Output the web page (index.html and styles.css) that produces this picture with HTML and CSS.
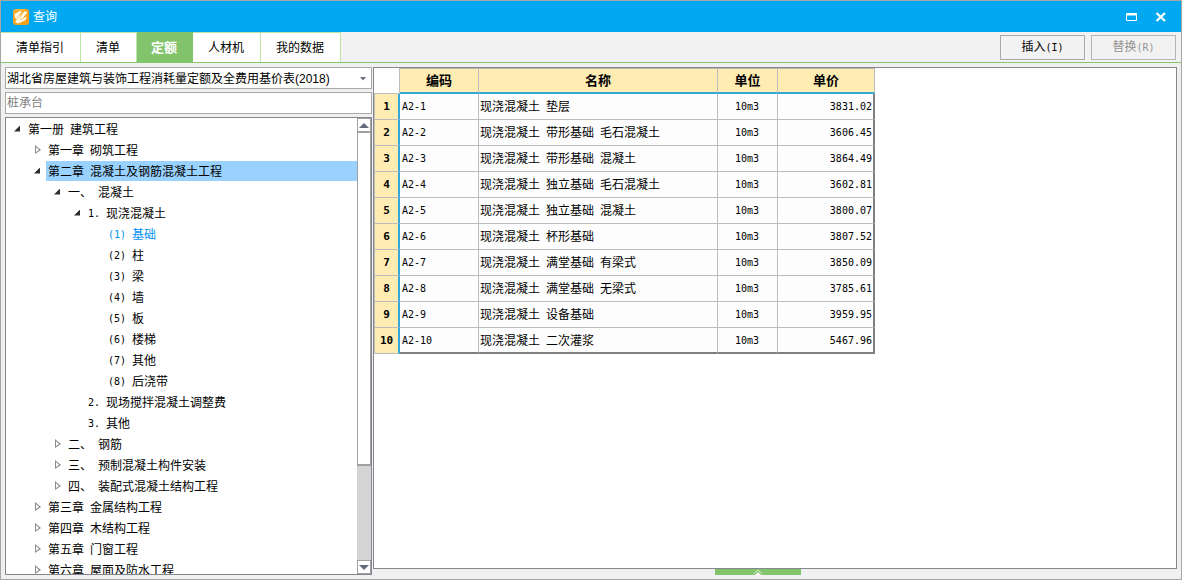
FILE: index.html
```html
<!DOCTYPE html>
<html lang="zh-CN">
<head>
<meta charset="utf-8">
<title>查询</title>
<link rel="stylesheet" href="styles.css">
</head>
<body>
<div class="window">
  <header class="titlebar">
    <svg class="logo" viewBox="0 0 16 16" aria-hidden="true">
      <rect width="16" height="16" rx="3" fill="#f9a11b"/>
      <path d="M1 4c0-2 1-3 3-3h8" stroke="#fcc860" fill="none"/>
      <path d="M1.500 5L7 2l2 1-3 3 1 1 5-5 2.500 1.500L10 8.500l4-.500-2 3.500L5 14.500 2 13l2-3-2-1z" fill="#fffbe8"/>
      <path d="M5.500 6.500L4 9.500M6.500 10l2.500 .500 4-3.500M9 6.500L6.500 9" stroke="#f6b545" stroke-width=".8" fill="none"/>
    </svg>
    <h1 class="title">查询</h1>
    <div class="window-buttons">
      <button class="window-button" aria-label="最大化"><svg width="12" height="10" viewBox="0 0 12 10"><path d="M.500 1v7.500h10V1" stroke="#fff" fill="none"/><path d="M0 1h11v2.500H0z" fill="#fff"/></svg></button>
      <button class="window-button" aria-label="关闭"><svg width="12" height="10" viewBox="0 0 12 10"><path d="M1.500 1l8.500 8M10 1L1.500 9" stroke="#fff" stroke-width="2.200" fill="none"/></svg></button>
    </div>
  </header>

  <div class="toolbar">
    <nav class="tabs" role="tablist">
      <button class="tab" role="tab">清单指引</button>
      <button class="tab" role="tab">清单</button>
      <button class="tab active" role="tab" aria-selected="true">定额</button>
      <button class="tab" role="tab">人材机</button>
      <button class="tab" role="tab">我的数据</button>
    </nav>
    <div class="actions">
      <button class="action">插入<span class="mono">(I)</span></button>
      <button class="action" disabled>替换<span class="mono">(R)</span></button>
    </div>
  </div>

  <main class="content">
    <aside class="sidebar">
      <div class="combo">
        <select class="field" aria-label="定额库"><option>湖北省房屋建筑与装饰工程消耗量定额及全费用基价表(2018)</option></select>
        <svg class="combo-arrow" width="6" height="4" viewBox="0 0 6 4" aria-hidden="true"><path d="M0 0h6L3 3.500z" fill="#6b7080"/></svg>
      </div>
      <input class="field" type="text" placeholder="桩承台" aria-label="搜索">
      <div class="tree-box">
        <ul class="tree" role="tree">
          <li>
            <div class="row"><button class="toggle open" aria-label="折叠"></button><span class="label"><span>第一册</span><span>建筑工程</span></span></div>
            <ul>
              <li><div class="row"><button class="toggle" aria-label="展开"></button><span class="label"><span>第一章</span><span>砌筑工程</span></span></div></li>
              <li>
                <div class="row"><button class="toggle open" aria-label="折叠"></button><span class="label selected"><span>第二章</span><span>混凝土及钢筋混凝土工程</span></span></div>
                <ul>
                  <li>
                    <div class="row"><button class="toggle open" aria-label="折叠"></button><span class="label"><span>一、</span><span>混凝土</span></span></div>
                    <ul>
                      <li>
                        <div class="row"><button class="toggle open" aria-label="折叠"></button><span class="label"><span class="mono">1.</span><span>现浇混凝土</span></span></div>
                        <ul>
                          <li><div class="row leaf"><span class="label current"><span class="mono">(1)</span><span>基础</span></span></div></li>
                          <li><div class="row leaf"><span class="label"><span class="mono">(2)</span><span>柱</span></span></div></li>
                          <li><div class="row leaf"><span class="label"><span class="mono">(3)</span><span>梁</span></span></div></li>
                          <li><div class="row leaf"><span class="label"><span class="mono">(4)</span><span>墙</span></span></div></li>
                          <li><div class="row leaf"><span class="label"><span class="mono">(5)</span><span>板</span></span></div></li>
                          <li><div class="row leaf"><span class="label"><span class="mono">(6)</span><span>楼梯</span></span></div></li>
                          <li><div class="row leaf"><span class="label"><span class="mono">(7)</span><span>其他</span></span></div></li>
                          <li><div class="row leaf"><span class="label"><span class="mono">(8)</span><span>后浇带</span></span></div></li>
                        </ul>
                      </li>
                      <li><div class="row leaf"><span class="label"><span class="mono">2.</span><span>现场搅拌混凝土调整费</span></span></div></li>
                      <li><div class="row leaf"><span class="label"><span class="mono">3.</span><span>其他</span></span></div></li>
                    </ul>
                  </li>
                  <li><div class="row"><button class="toggle" aria-label="展开"></button><span class="label"><span>二、</span><span>钢筋</span></span></div></li>
                  <li><div class="row"><button class="toggle" aria-label="展开"></button><span class="label"><span>三、</span><span>预制混凝土构件安装</span></span></div></li>
                  <li><div class="row"><button class="toggle" aria-label="展开"></button><span class="label"><span>四、</span><span>装配式混凝土结构工程</span></span></div></li>
                </ul>
              </li>
              <li><div class="row"><button class="toggle" aria-label="展开"></button><span class="label"><span>第三章</span><span>金属结构工程</span></span></div></li>
              <li><div class="row"><button class="toggle" aria-label="展开"></button><span class="label"><span>第四章</span><span>木结构工程</span></span></div></li>
              <li><div class="row"><button class="toggle" aria-label="展开"></button><span class="label"><span>第五章</span><span>门窗工程</span></span></div></li>
              <li><div class="row"><button class="toggle" aria-label="展开"></button><span class="label"><span>第六章</span><span>屋面及防水工程</span></span></div></li>
            </ul>
          </li>
        </ul>
        <div class="scrollbar">
          <button class="scroll-button" aria-label="向上"><svg width="10" height="5" viewBox="0 0 10 5"><path d="M0 5l5-5 5 5z" fill="#646b7a"/></svg></button>
          <div class="scroll-track"><div class="scroll-thumb"></div></div>
          <button class="scroll-button" aria-label="向下"><svg width="10" height="5" viewBox="0 0 10 5"><path d="M0 0l5 5 5-5z" fill="#646b7a"/></svg></button>
        </div>
      </div>
    </aside>

    <section class="results">
      <div class="grid-box">
        <table class="grid">
          <colgroup><col class="col-index"><col class="col-code"><col class="col-name"><col class="col-unit"><col class="col-price"></colgroup>
          <thead>
            <tr><td class="corner"></td><th scope="col">编码</th><th scope="col">名称</th><th scope="col">单位</th><th scope="col">单价</th></tr>
          </thead>
          <tbody>
            <tr><th scope="row">1</th><td class="mono">A2-1</td><td><span class="words"><span>现浇混凝土</span><span>垫层</span></span></td><td class="mono unit">10m3</td><td class="mono price">3831.02</td></tr>
            <tr><th scope="row">2</th><td class="mono">A2-2</td><td><span class="words"><span>现浇混凝土</span><span>带形基础</span><span>毛石混凝土</span></span></td><td class="mono unit">10m3</td><td class="mono price">3606.45</td></tr>
            <tr><th scope="row">3</th><td class="mono">A2-3</td><td><span class="words"><span>现浇混凝土</span><span>带形基础</span><span>混凝土</span></span></td><td class="mono unit">10m3</td><td class="mono price">3864.49</td></tr>
            <tr><th scope="row">4</th><td class="mono">A2-4</td><td><span class="words"><span>现浇混凝土</span><span>独立基础</span><span>毛石混凝土</span></span></td><td class="mono unit">10m3</td><td class="mono price">3602.81</td></tr>
            <tr><th scope="row">5</th><td class="mono">A2-5</td><td><span class="words"><span>现浇混凝土</span><span>独立基础</span><span>混凝土</span></span></td><td class="mono unit">10m3</td><td class="mono price">3800.07</td></tr>
            <tr><th scope="row">6</th><td class="mono">A2-6</td><td><span class="words"><span>现浇混凝土</span><span>杯形基础</span></span></td><td class="mono unit">10m3</td><td class="mono price">3807.52</td></tr>
            <tr><th scope="row">7</th><td class="mono">A2-7</td><td><span class="words"><span>现浇混凝土</span><span>满堂基础</span><span>有梁式</span></span></td><td class="mono unit">10m3</td><td class="mono price">3850.09</td></tr>
            <tr><th scope="row">8</th><td class="mono">A2-8</td><td><span class="words"><span>现浇混凝土</span><span>满堂基础</span><span>无梁式</span></span></td><td class="mono unit">10m3</td><td class="mono price">3785.61</td></tr>
            <tr><th scope="row">9</th><td class="mono">A2-9</td><td><span class="words"><span>现浇混凝土</span><span>设备基础</span></span></td><td class="mono unit">10m3</td><td class="mono price">3959.95</td></tr>
            <tr><th scope="row">10</th><td class="mono">A2-10</td><td><span class="words"><span>现浇混凝土</span><span>二次灌浆</span></span></td><td class="mono unit">10m3</td><td class="mono price">5467.96</td></tr>
          </tbody>
        </table>
      </div>
      <button class="expander" aria-label="展开详情"><svg width="10" height="6" viewBox="0 0 10 6"><path d="M.500 5L5 1l4.500 4" stroke="#d3eec5" fill="none"/><path d="M2 6l3-3 3 3z" fill="#fff"/></svg></button>
    </section>
  </main>
</div>
</body>
</html>
```

FILE: styles.css
```css
* {
  box-sizing: border-box;
}

body {
  margin: 0;
  font: 12px/22px "Liberation Sans", "Noto Sans CJK SC", sans-serif;
  color: #000;
}

button,
input,
select {
  margin: 0;
  padding: 0;
  border: 0;
  border-radius: 0;
  background: none;
  font: inherit;
  color: inherit;
}

ul {
  margin: 0;
  padding: 0;
  list-style: none;
}

.mono {
  font-family: "DejaVu Sans Mono", monospace;
  font-size: 10px;
}

.window {
  display: flex;
  flex-direction: column;
  height: 100vh;
  border: 1px solid #a6a6a6;
  background: #f0f0f0;
}

/* Title bar */
.titlebar {
  display: flex;
  align-items: center;
  flex: none;
  height: 31px;
  padding: 0 8px 0 12px;
  background: #02a9f2;
  color: #fff;
}

.logo {
  width: 16px;
  height: 16px;
}

.title {
  margin: 0 0 0 4px;
  font-size: 12px;
  font-weight: 400;
}

.window-buttons {
  display: flex;
  gap: 5px;
  margin-left: auto;
}

.window-button {
  display: flex;
  align-items: center;
  justify-content: center;
  width: 24px;
  height: 22px;
}

/* Tabs and actions */
.toolbar {
  display: flex;
  justify-content: space-between;
  flex: none;
  height: 31px;
  border-bottom: 1px solid #83c66b;
  background: #f2f2f2;
}

.tabs {
  display: flex;
}

.tab {
  padding: 1px 16px 0 15px;
  border-top: 1px solid #b9e6a5;
  border-right: 1px solid #b9e6a5;
  background: #fff;
}

.tab.active {
  padding: 1px 15px 0 14px;
  border-color: #82c46c;
  background: #82c46c;
  color: #fff;
  font-size: 13px;
  font-weight: 700;
}

.actions {
  display: flex;
  gap: 6px;
  padding: 3px 5px 2px 0;
}

.action {
  width: 85px;
  height: 25px;
  border: 1px solid #a9a9a9;
  background: #f2f2f2;
}

.action:disabled {
  border-color: #b5b5b5;
  color: #929292;
}

/* Main area */
.content {
  display: flex;
  flex: 1;
  gap: 1px;
  min-height: 0;
  padding: 4px;
}

.sidebar {
  display: flex;
  flex-direction: column;
  flex: none;
  gap: 3px;
  width: 367px;
}

.combo {
  position: relative;
  display: flex;
}

.field {
  width: 100%;
  height: 22px;
  padding: 0 1px;
  border: 1px solid #a9a9a9;
  background: #fff;
  appearance: none;
}

.field::placeholder {
  color: #808080;
  opacity: 1;
}

.combo-arrow {
  position: absolute;
  top: 10px;
  right: 6px;
}

.tree-box {
  display: flex;
  flex: 1;
  min-height: 0;
  border: 1px solid #838790;
  background: #fff;
}

.tree {
  flex: 1;
  min-width: 0;
  padding-top: 1px;
  overflow: hidden;
}

.tree ul {
  padding-left: 20px;
}

.row {
  display: flex;
  height: 21px;
}

.leaf {
  padding-left: 20px;
}

.toggle {
  flex: none;
  width: 20px;
  padding: 0 3px 2px 9px;
}

.toggle::before {
  content: "";
  display: block;
  width: 6px;
  height: 9px;
  background: #8c8c8c;
  clip-path: polygon(0 0, 6px 5px, 0 9px, 0 1px, 1px 2px, 1px 7px, 4px 5px, 0 1px);
}

.toggle.open {
  padding-left: 8px;
}

.toggle.open::before {
  width: 6px;
  height: 6px;
  background: #2f2f2f;
  clip-path: polygon(100% 0, 100% 100%, 0 100%);
}

.label {
  display: flex;
  flex: 1;
  gap: 6px;
  height: 20px;
  padding-left: 2px;
  white-space: nowrap;
}

.label.selected {
  background: #99d1ff;
}

.label.current {
  color: #0090f2;
}

/* Scrollbar */
.scrollbar {
  display: flex;
  flex-direction: column;
  flex: none;
  width: 14px;
}

.scroll-button {
  display: flex;
  align-items: center;
  justify-content: center;
  height: 14px;
  border: 1px solid #a0a0a0;
  background: #fff;
}

.scroll-track {
  flex: 1;
  background: #d4d4d4;
}

.scroll-thumb {
  height: 78%;
  border: 1px solid #a0a0a0;
  border-bottom-width: 2px;
  background: #fff;
}

/* Results grid */
.results {
  display: flex;
  flex-direction: column;
  flex: 1;
  min-width: 0;
}

.grid-box {
  flex: 1;
  min-height: 0;
  border: 1px solid #838790;
  background: #fff;
}

.grid {
  width: 501px;
  table-layout: fixed;
  border-spacing: 0;
}

.col-index {
  width: 26px;
}

.col-code {
  width: 79px;
}

.col-name {
  width: 239px;
}

.col-unit {
  width: 60px;
}

.grid th,
.grid td {
  height: 26px;
  padding: 1px 1px 0;
  border: 0 solid #bcbcbc;
  border-width: 0 1px 1px 0;
  background: #fdfdfd;
  text-align: left;
}

.grid thead th {
  padding-top: 0;
  border-top: 1px solid #b8b4a6;
  border-bottom: 2px solid #36a6d4;
  background: #ffecb3;
  font-size: 13px;
  text-align: center;
}

.grid thead .corner {
  background: #fff;
}

.grid tbody th {
  border-left: 1px solid #bcbcbc;
  border-right: 2px solid #36a6d4;
  background: #ffecb3;
  font-family: "DejaVu Sans Mono", monospace;
  font-size: 11px;
  text-align: center;
}

.grid tbody td:last-child {
  border-right: 2px solid #808080;
}

.grid tbody tr:last-child td {
  border-bottom: 2px solid #808080;
}

.grid tbody .mono {
  padding-left: 2px;
}

.grid tbody .unit {
  padding-left: 0;
  text-align: center;
}

.grid .price {
  text-align: right;
}

.words {
  display: flex;
  gap: 6px;
}

.expander {
  display: flex;
  align-items: flex-end;
  justify-content: center;
  align-self: center;
  flex: none;
  width: 86px;
  height: 6px;
  margin-right: 35px;
  background: #82c46c;
}
```
